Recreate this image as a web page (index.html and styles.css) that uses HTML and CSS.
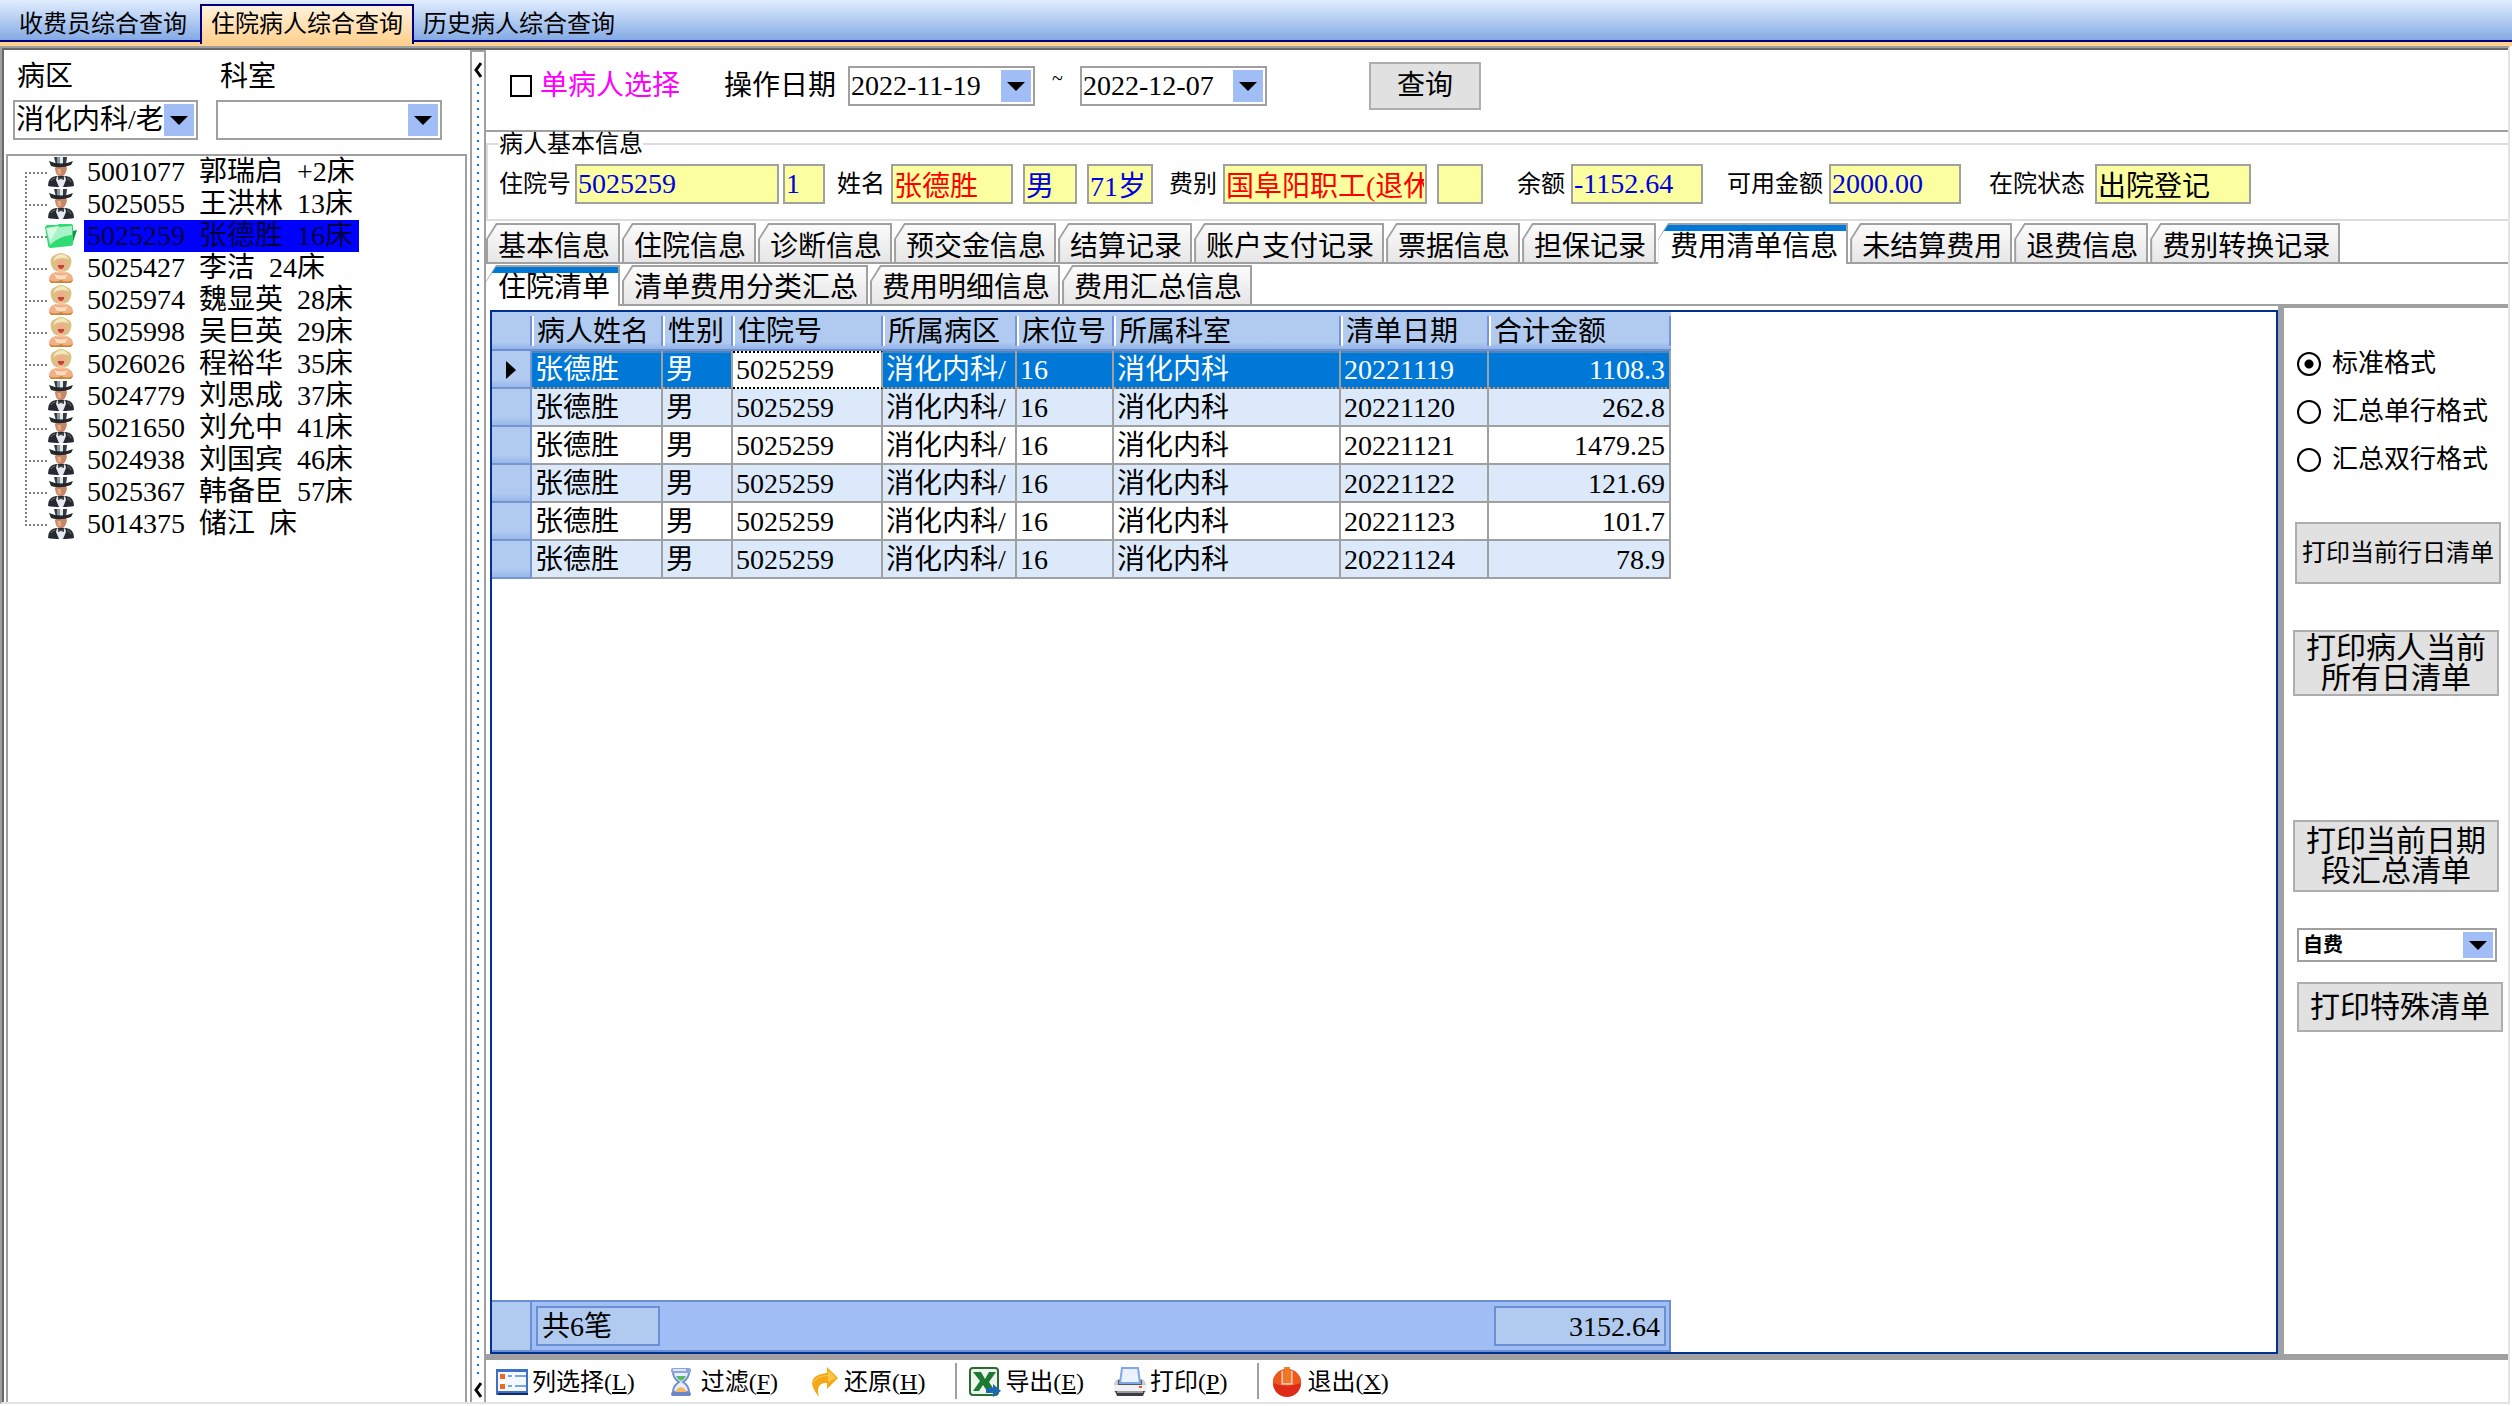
FILE: index.html
```html
<!DOCTYPE html>
<html lang="zh-CN">
<head>
    <meta charset="UTF-8">
    <meta name="viewport" content="width=device-width, initial-scale=1.0">
    <title>住院病人综合查询</title>
    <link rel="stylesheet" href="styles.css">
</head>
<body>

    <!-- Icônes partagées -->
    <svg class="sprite" aria-hidden="true">
        <symbol id="man" viewBox="0 0 26 30">
            <path d="M6 0h13l-1 8H8z" fill="#343a40"/>
            <path d="M9 0h3v7H9z" fill="#8c959e"/>
            <path d="M12 0h3v7h-3z" fill="#e4e9ee"/>
            <path d="M8 8h10l1 4q-2 6-4 7v3h-4v-3q-3-1-4-7z" fill="#c98564"/>
            <path d="M9 12h4v5h-3z" fill="#e3ab8b"/>
            <path d="M1 4q12 5 24 0l-2 4q-10 4-20 1z" fill="#23282d"/>
            <path d="M0 29q0-9 8-10h10q8 1 8 10-4 1-13 1T0 29z" fill="#262a30"/>
            <path d="M9 19l4 3 4-3 1 4-3 7h-4l-3-7z" fill="#e6e9f0"/>
            <path d="M10 19l3 3 3-3v4l-3-1-3 1z" fill="#3d4148"/>
            <path d="M3 24q2-3 4-3M19 21q3 1 4 4" stroke="#6d737c" stroke-width="1" fill="none"/>
        </symbol>
        <symbol id="woman" viewBox="0 0 26 30">
            <path d="M4 14Q0 5 7 2q6-4 12 0 7 3 3 12-2 5-9 5t-9-5z" fill="#dcc083"/>
            <path d="M5 8q2-6 8-7 5 0 8 5-9-3-16 2z" fill="#f3e6b8"/>
            <path d="M8 7h10v7q-2 5-5 5t-5-5z" fill="#eeb08c"/>
            <path d="M10 12h6v2q-3 4-6 0z" fill="#c4452e"/>
            <path d="M10 17h6v4h-6z" fill="#f5c7a3"/>
            <path d="M1 28q-1-7 7-9 5 2 10 0 8 2 7 9-4 2-12 2T1 28z" fill="#f1b184"/>
            <path d="M6 21q7 3 14 0l-3 5H9z" fill="#fbdcc4"/>
            <path d="M1 27q6 3 12 0 6 3 12 0l-2 3H3z" fill="#c98436"/>
        </symbol>
        <symbol id="folder" viewBox="0 0 32 26">
            <path d="M28 8l4-1-5 15-4 1z" fill="#0f9446"/>
            <path d="M0 4l2-2h10l2-1h12q2 0 2 2v17q0 3-3 3L6 25q-3 0-3-3z" fill="#2fdc73"/>
            <path d="M1 5l26-2v9Q14 13 5 22z" fill="#a9f3c8"/>
            <path d="M2 5l12-2-9 15z" fill="#d6fbe4"/>
        </symbol>
        <symbol id="columns" viewBox="0 0 32 26">
            <path d="M0 0h32v26H0z" fill="#3f6fc6"/>
            <path d="M2 3h28v19H2z" fill="#f4f8ff"/>
            <path d="M2 24h30v2H2z" fill="#132c63"/>
            <path d="M4 5h5v5H4zM4 15h5v5H4z" fill="#ea6a24"/>
            <path d="M12 7h4M19 7h11M12 17h4M19 17h11" stroke="#7ba2e2" stroke-width="2"/>
        </symbol>
        <symbol id="hourglass" viewBox="0 0 22 30">
            <path d="M3 5h16q0 6-6 10 6 4 6 10H3q0-6 6-10-6-4-6-10z" fill="#e7eefb" stroke="#6f8fd2" stroke-width="2"/>
            <path d="M6 9h10q-2 4-5 5-3-1-5-5z" fill="#57b85e"/>
            <path d="M5 26q1-5 6-6 5 1 6 6z" fill="#f4b662"/>
            <rect x="1" y="1" width="20" height="5" rx="2" fill="#8ba6de"/>
            <path d="M3 2h13v2H3z" fill="#dbe6fa"/>
            <rect x="1" y="25" width="20" height="4" rx="2" fill="#6a86c8"/>
        </symbol>
        <symbol id="restore" viewBox="0 0 28 30">
            <path d="M17 0l11 11-11 11v-6Q5 15 9 30-8 9 17 6z" fill="#f2a818"/>
            <path d="M18 3l8 8-8 4V9Q6 9 2 19 4 8 18 8z" fill="#fac64a"/>
        </symbol>
        <symbol id="excel" viewBox="0 0 32 30">
            <rect x="1" y="1" width="28" height="27" rx="3" fill="#edf6ec" stroke="#2b6b34" stroke-width="2"/>
            <path d="M4 5h8l4 7 4-7h7l-7 10 6 9h-8l-4-6-4 6H4l7-10z" fill="#1d7a33"/>
            <path d="M17 21h7v-4l8 7-8 6v-4h-7z" fill="#1d69ae"/>
        </symbol>
        <symbol id="printer" viewBox="0 0 32 30">
            <path d="M4 12h24q4 2 4 6v7H0v-7q0-4 4-6z" fill="#c9cbd0"/>
            <path d="M4 13h24v5H4z" fill="#54575e"/>
            <path d="M8 1h16l2 15H6z" fill="#eaf2ff" stroke="#7fa6ea" stroke-width="2"/>
            <path d="M0 18h32v6H0z" fill="#f1f1f4"/>
            <path d="M1 24h30l-2 5H3z" fill="#3b3d42"/>
            <path d="M3 24h26v2H3z" fill="#9a9ca2"/>
            <path d="M25 19h3v2h-3z" fill="#e8542b"/>
        </symbol>
        <symbol id="power" viewBox="0 0 32 32">
            <circle cx="16" cy="17" r="15" fill="#df2a18"/>
            <path d="M1 17a15 15 0 0 1 30 0q-15 6-30 0z" fill="#ec5a1c"/>
            <path d="M11 4v14h10V4" fill="none" stroke="#f9c3ae" stroke-width="2"/>
            <path d="M13 0h6v17h-6z" fill="#ee7a22"/>
        </symbol>
    </svg>

    <!-- Onglets principaux -->
    <nav class="top-tabs">
        <button class="top-tab">收费员综合查询</button>
        <button class="top-tab active">住院病人综合查询</button>
        <button class="top-tab">历史病人综合查询</button>
    </nav>

    <div class="window">

        <!-- Liste des patients -->
        <aside class="sidebar">
            <div class="filters">
                <div class="filter ward">
                    <label for="ward">病区</label>
                    <div class="combo">
                        <select id="ward"><option>消化内科/老</option></select>
                    </div>
                </div>
                <div class="filter dept">
                    <label for="dept">科室</label>
                    <div class="combo">
                        <select id="dept"><option></option></select>
                    </div>
                </div>
            </div>
            <ul class="tree">
                <li><svg><use href="#man"/></svg><p><span>5001077</span><span>郭瑞启</span><span>+2床</span></p></li>
                <li><svg><use href="#man"/></svg><p><span>5025055</span><span>王洪林</span><span>13床</span></p></li>
                <li class="selected"><svg><use href="#folder"/></svg><p><span>5025259</span><span>张德胜</span><span>16床</span></p></li>
                <li><svg><use href="#woman"/></svg><p><span>5025427</span><span>李洁</span><span>24床</span></p></li>
                <li><svg><use href="#woman"/></svg><p><span>5025974</span><span>魏显英</span><span>28床</span></p></li>
                <li><svg><use href="#woman"/></svg><p><span>5025998</span><span>吴巨英</span><span>29床</span></p></li>
                <li><svg><use href="#woman"/></svg><p><span>5026026</span><span>程裕华</span><span>35床</span></p></li>
                <li><svg><use href="#man"/></svg><p><span>5024779</span><span>刘思成</span><span>37床</span></p></li>
                <li><svg><use href="#man"/></svg><p><span>5021650</span><span>刘允中</span><span>41床</span></p></li>
                <li><svg><use href="#man"/></svg><p><span>5024938</span><span>刘国宾</span><span>46床</span></p></li>
                <li><svg><use href="#man"/></svg><p><span>5025367</span><span>韩备臣</span><span>57床</span></p></li>
                <li><svg><use href="#man"/></svg><p><span>5014375</span><span>储江</span><span>床</span></p></li>
            </ul>
        </aside>

        <div class="splitter">
            <svg viewBox="0 0 8 16"><path d="M7 1L2 8l5 7" fill="none" stroke="#000" stroke-width="3"/></svg>
            <div class="dots"></div>
            <svg viewBox="0 0 8 16"><path d="M7 1L2 8l5 7" fill="none" stroke="#000" stroke-width="3"/></svg>
        </div>

        <main class="main">

            <!-- Critères de recherche -->
            <form class="query">
                <input type="checkbox" id="single">
                <label for="single" class="single">单病人选择</label>
                <label for="date-from" class="date-label">操作日期</label>
                <div class="combo date">
                    <select id="date-from"><option>2022-11-19</option></select>
                </div>
                <span class="tilde">~</span>
                <div class="combo date">
                    <select id="date-to" aria-label="结束日期"><option>2022-12-07</option></select>
                </div>
                <button type="button" class="btn search">查询</button>
            </form>

            <!-- Informations du patient -->
            <fieldset class="patient">
                <legend>病人基本信息</legend>
                <div class="fields">
                    <label for="no">住院号</label>
                    <input id="no" class="w-no" value="5025259" readonly>
                    <input class="w-times" value="1" aria-label="次数" readonly>
                    <label for="name" class="near">姓名</label>
                    <input id="name" class="w-name red" value="张德胜" readonly>
                    <input class="w-sex" value="男" aria-label="性别" readonly>
                    <input class="w-age" value="71岁" aria-label="年龄" readonly>
                    <label for="fee" class="mid">费别</label>
                    <input id="fee" class="w-fee red" value="国阜阳职工(退休" readonly>
                    <input class="w-extra" value="" aria-label="备注" readonly>
                    <label for="balance" class="far">余额</label>
                    <input id="balance" class="w-money" value="-1152.64" readonly>
                    <label for="usable" class="money">可用金额</label>
                    <input id="usable" class="w-money" value="2000.00" readonly>
                    <label for="state" class="state">在院状态</label>
                    <input id="state" class="w-state black" value="出院登记" readonly>
                </div>
            </fieldset>

            <div class="tabs" role="tablist">
                <button class="tab" role="tab">基本信息</button>
                <button class="tab" role="tab">住院信息</button>
                <button class="tab" role="tab">诊断信息</button>
                <button class="tab" role="tab">预交金信息</button>
                <button class="tab" role="tab">结算记录</button>
                <button class="tab" role="tab">账户支付记录</button>
                <button class="tab" role="tab">票据信息</button>
                <button class="tab" role="tab">担保记录</button>
                <button class="tab active" role="tab">费用清单信息</button>
                <button class="tab" role="tab">未结算费用</button>
                <button class="tab" role="tab">退费信息</button>
                <button class="tab" role="tab">费别转换记录</button>
            </div>
            <div class="tabs" role="tablist">
                <button class="tab active" role="tab">住院清单</button>
                <button class="tab" role="tab">清单费用分类汇总</button>
                <button class="tab" role="tab">费用明细信息</button>
                <button class="tab" role="tab">费用汇总信息</button>
            </div>

            <div class="content">
                <div class="grid">
                    <table>
                        <colgroup>
                            <col class="c-mark"><col class="c-name"><col class="c-sex"><col class="c-no"><col class="c-ward"><col class="c-bed"><col class="c-dept"><col class="c-date"><col class="c-sum">
                        </colgroup>
                        <thead>
                            <tr><th></th><th>病人姓名</th><th>性别</th><th>住院号</th><th>所属病区</th><th>床位号</th><th>所属科室</th><th>清单日期</th><th>合计金额</th></tr>
                        </thead>
                        <tbody>
                            <tr class="current"><td class="mark"><span class="pointer"></span></td><td>张德胜</td><td>男</td><td class="focus">5025259</td><td>消化内科/</td><td>16</td><td>消化内科</td><td>20221119</td><td class="sum">1108.3</td></tr>
                            <tr><td class="mark"></td><td>张德胜</td><td>男</td><td>5025259</td><td>消化内科/</td><td>16</td><td>消化内科</td><td>20221120</td><td class="sum">262.8</td></tr>
                            <tr><td class="mark"></td><td>张德胜</td><td>男</td><td>5025259</td><td>消化内科/</td><td>16</td><td>消化内科</td><td>20221121</td><td class="sum">1479.25</td></tr>
                            <tr><td class="mark"></td><td>张德胜</td><td>男</td><td>5025259</td><td>消化内科/</td><td>16</td><td>消化内科</td><td>20221122</td><td class="sum">121.69</td></tr>
                            <tr><td class="mark"></td><td>张德胜</td><td>男</td><td>5025259</td><td>消化内科/</td><td>16</td><td>消化内科</td><td>20221123</td><td class="sum">101.7</td></tr>
                            <tr><td class="mark"></td><td>张德胜</td><td>男</td><td>5025259</td><td>消化内科/</td><td>16</td><td>消化内科</td><td>20221124</td><td class="sum">78.9</td></tr>
                        </tbody>
                    </table>
                    <div class="summary">
                        <span class="count">共6笔</span>
                        <span class="total">3152.64</span>
                    </div>
                </div>

                <!-- Impression -->
                <aside class="print">
                    <div class="formats">
                        <label><input type="radio" name="format" checked>标准格式</label>
                        <label><input type="radio" name="format">汇总单行格式</label>
                        <label><input type="radio" name="format">汇总双行格式</label>
                    </div>
                    <button class="btn print-day">打印当前行日清单</button>
                    <button class="btn print-all">打印病人当前<br>所有日清单</button>
                    <button class="btn print-range">打印当前日期<br>段汇总清单</button>
                    <div class="combo pay">
                        <select aria-label="费别"><option>自费</option></select>
                    </div>
                    <button class="btn print-special">打印特殊清单</button>
                </aside>
            </div>

            <div class="toolbar">
                <button><svg viewBox="0 0 32 26"><use href="#columns"/></svg>列选择(<u>L</u>)</button>
                <button><svg viewBox="0 0 22 30"><use href="#hourglass"/></svg>过滤(<u>F</u>)</button>
                <button><svg viewBox="0 0 28 30"><use href="#restore"/></svg>还原(<u>H</u>)</button>
                <hr>
                <button><svg viewBox="0 0 32 30"><use href="#excel"/></svg>导出(<u>E</u>)</button>
                <button><svg viewBox="0 0 32 30"><use href="#printer"/></svg>打印(<u>P</u>)</button>
                <hr>
                <button><svg viewBox="0 0 32 32"><use href="#power"/></svg>退出(<u>X</u>)</button>
            </div>
        </main>
    </div>

</body>
</html>
```
FILE: styles.css
```css
* {
    box-sizing: border-box;
}
body {
    margin: 0;
    height: 100vh;
    display: flex;
    flex-direction: column;
    font-family: "Liberation Serif", "Noto Sans CJK SC", serif;
    font-size: 28px;
    line-height: 32px;
    color: #000;
    background-color: #fff;
}
button, input, select {
    font: inherit;
    color: inherit;
    margin: 0;
    border-radius: 0;
}
.sprite {
    display: none;
}

/* Onglets principaux */
.top-tabs {
    display: flex;
    height: 46px;
    padding: 4px 0 0 8px;
    background: linear-gradient(#e2eeff, #84aae4 40px, #000080 40px, #000080 42px, #ffd08e 42px);
}
.top-tab {
    height: 36px;
    padding: 2px 9px 0 9px;
    font-size: 24px;
    background: none;
    border: 2px solid transparent;
    border-bottom: none;
}
.top-tab.active {
    height: 40px;
    padding-bottom: 4px;
    border-color: #000080;
    background: linear-gradient(#fff2dc, #ffd08e);
}
.top-tab:first-child {
    margin-right: 2px;
}
.top-tab:last-child {
    padding-left: 7px;
}

.window {
    flex: 1;
    min-height: 0;
    display: flex;
    margin: 0 2px 2px 0;
    border: 2px solid #a0a0a0;
    border-right-color: #e3e3e3;
    border-bottom-color: #e3e3e3;
    box-shadow: inset 2px 2px #696969;
    padding: 2px 0 0 2px;
}

/* Liste déroulante */
.combo {
    position: relative;
    height: 40px;
    border: 2px solid #a0a0a0;
    background-color: #fff;
}
.combo select {
    width: 100%;
    height: 100%;
    padding: 0 1px;
    border: none;
    appearance: none;
    background: none;
}
.combo::after {
    content: "";
    position: absolute;
    top: 2px;
    right: 2px;
    bottom: 2px;
    width: 30px;
    pointer-events: none;
    background-color: #a0bdf5;
}
.combo::before {
    content: "";
    position: absolute;
    z-index: 1;
    top: 50%;
    right: 8px;
    margin-top: -4px;
    border: 9px solid transparent;
    border-top-color: #000;
    border-bottom: none;
    pointer-events: none;
}

/* Panneau gauche */
.sidebar {
    width: 468px;
    padding: 8px 3px 0 2px;
    border-right: 2px solid #a0a0a0;
    display: flex;
    flex-direction: column;
}
.filters {
    display: flex;
    gap: 18px;
    padding-left: 7px;
    height: 96px;
}
.filter label {
    display: block;
    padding: 3px 4px 7px 4px;
}
.filter.ward {
    width: 185px;
}
.filter.dept {
    width: 226px;
}
.tree {
    flex: 1;
    margin: 0;
    padding: 0 0 0 17px;
    list-style: none;
    border: 2px solid #a0a0a0;
    border-bottom: none;
}
.tree li {
    display: flex;
    align-items: center;
    height: 32px;
    background:
        repeating-linear-gradient(90deg, #808080 0 2px, transparent 2px 4px) 0 16px / 22px 2px no-repeat,
        repeating-linear-gradient(#808080 0 2px, transparent 2px 4px) 0 0 / 2px 100% no-repeat;
}
.tree li:first-child {
    background-position: 0 16px, 0 16px;
}
.tree li:last-child {
    background-size: 22px 2px, 2px 16px;
}
.tree svg {
    width: 32px;
    height: 30px;
    margin-left: 20px;
}
.tree p {
    display: flex;
    gap: 14px;
    margin: 0 0 0 7px;
    padding: 0 6px 0 3px;
}
.tree .selected p {
    background-color: #0000ff;
    color: #000040;
}

.splitter {
    width: 14px;
    padding: 10px 2px 4px 2px;
    border-top: 2px solid #a0a0a0;
    border-right: 2px solid #a0a0a0;
    display: flex;
    flex-direction: column;
    align-items: center;
    gap: 6px;
}
.splitter svg {
    width: 8px;
    height: 16px;
}
.dots {
    flex: 1;
    width: 2px;
    background: repeating-linear-gradient(#0078d7 0 2px, transparent 2px 8px);
}

.main {
    flex: 1;
    min-width: 0;
    display: flex;
    flex-direction: column;
}
.btn {
    padding: 0;
    background-color: #e1e1e1;
    border: 2px solid #adadad;
}

/* Recherche */
.query {
    display: flex;
    align-items: center;
    height: 82px;
    padding: 0 24px 8px 24px;
    border-bottom: 2px solid #a0a0a0;
}
.query input {
    appearance: none;
    width: 22px;
    height: 22px;
    margin-right: 8px;
    border: 2px solid #000;
}
.single {
    color: #ff00ff;
}
.date-label {
    margin: 0 12px 0 44px;
}
.date {
    width: 187px;
}
.tilde {
    width: 45px;
    text-align: center;
    font-size: 20px;
    padding-bottom: 16px;
}
.search {
    width: 112px;
    height: 48px;
    margin-left: 102px;
}

/* Fiche patient */
.patient {
    margin: 0;
    height: 89px;
    padding: 0 0 0 11px;
    border: 2px solid #dcdcdc;
    border-right: none;
    font-size: 24px;
    min-width: 0;
}
.patient legend {
    padding: 0;
    line-height: 24px;
}
.fields {
    display: flex;
    align-items: center;
    padding-top: 8px;
    white-space: nowrap;
}
.fields input {
    height: 40px;
    min-width: 0;
    margin-left: 4px;
    padding: 0 1px;
    font-size: 28px;
    color: #0000e0;
    background-color: #fbff9f;
    border: 2px solid #a0a0a0;
}
.fields .red { color: #f00; }
.fields .black { color: #000; }
.fields label + input { margin-left: 6px; }
.fields .near { margin-left: 12px; }
.fields .mid { margin-left: 16px; }
.fields .far { margin-left: 34px; }
.fields .money { margin-left: 24px; }
.fields .state { margin-left: 28px; }
.fields .w-no { width: 204px; margin-left: 4px; }
.fields .w-times { width: 42px; }
.fields .w-name { width: 122px; }
.fields .w-sex { width: 54px; margin-left: 10px; }
.fields .w-age { width: 66px; margin-left: 10px; }
.fields .w-fee { width: 204px; }
.fields .w-extra { width: 46px; margin-left: 10px; }
.fields .w-money { width: 132px; }
.fields .w-state { width: 156px; margin-left: 10px; }

/* Onglets */
.tabs {
    display: flex;
    gap: 2px;
    height: 43px;
    padding-top: 2px;
    background: linear-gradient(#a0a0a0, #a0a0a0) bottom / 100% 2px no-repeat;
}
.tabs + .tabs {
    height: 42px;
    padding-top: 1px;
}
.tab {
    position: relative;
    z-index: 0;
    padding: 6px 10px 0 12px;
    border: none;
    white-space: nowrap;
    background-color: #a0a0a0;
    clip-path: polygon(0 16px, 10px 0, 100% 0, 100% 100%, 0 100%);
}
.tabs + .tabs .tab {
    padding-top: 5px;
}
.tab::before {
    content: "";
    position: absolute;
    z-index: -1;
    inset: 2px 2px 2px 2px;
    background: linear-gradient(#fbfbfb, #e6e6e6);
    clip-path: polygon(0 14px, 9px 0, 100% 0, 100% 100%, 0 100%);
}
.tab.active::before {
    inset: 2px 2px 0 0;
    background: linear-gradient(#0078d7 6px, #fff 6px);
    clip-path: polygon(0 15px, 10px 0, 100% 0, 100% 100%, 0 100%);
}

/* Tableau */
.content {
    flex: 1;
    min-height: 0;
    display: flex;
    border-bottom: 6px solid #a0a0a0;
}
.grid {
    flex: 1;
    min-width: 0;
    margin: 4px 0 0 4px;
    border: 2px solid #003090;
    display: flex;
    flex-direction: column;
    justify-content: space-between;
    align-items: flex-start;
}
table {
    width: 1179px;
    table-layout: fixed;
    border-collapse: separate;
    border-spacing: 0;
}
.c-mark { width: 40px; }
.c-name { width: 131px; }
.c-sex { width: 70px; }
.c-no { width: 150px; }
.c-ward { width: 134px; }
.c-bed { width: 97px; }
.c-dept { width: 227px; }
.c-date { width: 148px; }
.c-sum { width: 182px; }
th {
    height: 39px;
    padding: 3px 0 0 5px;
    text-align: left;
    font-weight: normal;
    white-space: nowrap;
    overflow: hidden;
    border-bottom: 2px solid #6b8fd0;
    background:
        linear-gradient(#fff, #fff) 0 4px / 2px 30px no-repeat,
        linear-gradient(#7894dc, #7894dc) 100% 4px / 2px 30px no-repeat,
        linear-gradient(#b0cbef 30px, #93b2ea);
}
th:first-child {
    background: linear-gradient(#7894dc, #7894dc) 100% 4px / 2px 30px no-repeat, linear-gradient(#b0cbef 30px, #93b2ea);
}
td {
    height: 38px;
    padding: 2px 4px 0 3px;
    white-space: nowrap;
    overflow: hidden;
    border-right: 2px solid #a0a0a0;
    border-bottom: 2px solid #a0a0a0;
}
tbody tr:nth-child(even) td {
    background-color: #dce9fa;
}
tbody td.mark, tbody tr:nth-child(even) td.mark {
    padding-left: 14px;
    border-color: #7894d0;
    background: linear-gradient(#b0cbef 28px, #98b7ea);
}
.pointer {
    display: block;
    border: 9px solid transparent;
    border-left: 10px solid #000;
    border-right: none;
    width: 10px;
}
td.sum {
    text-align: right;
}
.current td:not(.mark) {
    color: #fff;
    background-color: #0078d7;
    border-bottom: 2px dotted #d9935a;
    box-shadow: inset 0 2px #4a86b8;
}
.current td.focus:not(.mark) {
    padding-top: 0;
    color: #000;
    background-color: #fff;
    border-bottom-color: #000;
    box-shadow: none;
    border-top: 2px dotted #000;
}
.summary {
    width: 1179px;
    height: 52px;
    padding: 4px 3px 4px 44px;
    display: flex;
    justify-content: space-between;
    border: 2px solid #6b8fd0;
    border-left: none;
    background: linear-gradient(90deg, #b0cbef 38px, #6b8fd0 38px, #6b8fd0 40px, #a0bdf5 40px);
}
.summary span {
    padding: 3px 4px 0 4px;
    border: 2px solid #6b8fd0;
    background-color: #b0cbef;
}
.count {
    width: 124px;
}
.total {
    width: 172px;
    text-align: right;
}

/* Panneau d'impression */
.print {
    width: 230px;
    padding: 32px 4px 0 9px;
    border-left: 6px solid #a0a0a8;
    border-top: 2px solid #a0a0a0;
    display: flex;
    flex-direction: column;
    align-items: flex-start;
    font-size: 30px;
    line-height: 30px;
}
.print > * {
    flex: none;
    width: 206px;
}
.formats {
    display: flex;
    flex-direction: column;
    font-size: 26px;
    line-height: 48px;
    margin-bottom: 38px;
    margin-left: 4px;
    white-space: nowrap;
}
.formats label {
    display: flex;
    align-items: center;
    gap: 11px;
}
.formats input {
    appearance: none;
    width: 24px;
    height: 24px;
    border: 2px solid #000;
    border-radius: 50%;
}
.formats input:checked {
    background: radial-gradient(circle, #000 4px, transparent 5px);
}
.print-day {
    height: 62px;
    margin: 0 0 46px 2px;
    font-size: 24px;
}
.print-all {
    height: 66px;
    margin-bottom: 124px;
}
.print-range {
    height: 72px;
    margin-bottom: 36px;
}
.print .pay {
    width: 200px;
    height: 34px;
    margin: 0 0 20px 4px;
    font-size: 20px;
    font-weight: bold;
    line-height: 24px;
}
.pay select {
    padding: 0 4px;
}
.print-special {
    height: 50px;
    margin-left: 4px;
}

.toolbar {
    display: flex;
    align-items: center;
    height: 42px;
    padding-left: 10px;
    font-size: 24px;
}
.toolbar button {
    display: flex;
    align-items: center;
    padding: 2px 0 0 0;
    margin-right: 30px;
    border: none;
    background: none;
}
.toolbar svg {
    width: 32px;
    height: 30px;
    margin-right: 4px;
}
.toolbar hr {
    width: 2px;
    height: 36px;
    margin: 0 12px 0 0;
    border: none;
    background-color: #a0a0a0;
}
```
